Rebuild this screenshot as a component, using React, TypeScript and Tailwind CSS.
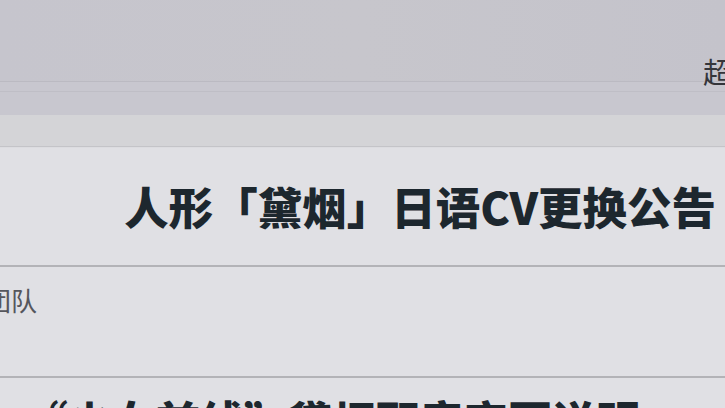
import React from 'react';

const cjk = { fontFamily: '"Noto Sans CJK SC", "Noto Sans", sans-serif' };

const App: React.FC = () => {
  return (
    <div className="w-[725px] h-[408px] overflow-hidden bg-[#e0e0e4]" style={cjk}>
      {/* top header strip */}
      <div className="h-[81px] bg-gradient-to-r from-[#c6c5cd] via-[#c7c6cc] to-[#c4c3cb] flex items-end">
        <div className="ml-[703px] whitespace-nowrap text-[29px] leading-[34px] text-[#34353b] translate-y-[7px]">
          超话社区
        </div>
      </div>
      <div className="h-[1px] bg-[#bbbac2]" />
      <div className="h-[9px] bg-[#c8c7cf]" />
      <div className="h-[1px] bg-[#bfbec6]" />
      <div className="h-[23px] bg-[#c8c7cf]" />
      <div className="h-[31px] bg-[#d4d4d7]" />
      <div className="h-[1px] bg-[#c4c4c8]" />
      <div className="h-[1px] bg-[#dcdce0]" />

      {/* title panel */}
      <div className="h-[117px] flex items-center justify-end pr-[9px]">
        <h1 className="text-[44.5px] leading-none font-black text-[#1d272e] whitespace-nowrap">
          人形「黛烟」日语CV更换公告
        </h1>
      </div>
      <div className="h-[2px] bg-[#b3b3b7]" />

      {/* author panel */}
      <div className="h-[109px] pt-[14px]">
        <div className="-ml-[15px] text-[26px] leading-[38px] text-[#55565c] whitespace-nowrap">团队</div>
      </div>
      <div className="h-[2px] bg-[#b3b3b7]" />

      {/* next title, cut off */}
      <div className="pt-[20px] pl-[24px]">
        <div className="text-[44px] leading-none font-black text-[#1d272e] whitespace-nowrap">
          “少女前线”黛烟配音变更说明
        </div>
      </div>
    </div>
  );
};

export default App;
